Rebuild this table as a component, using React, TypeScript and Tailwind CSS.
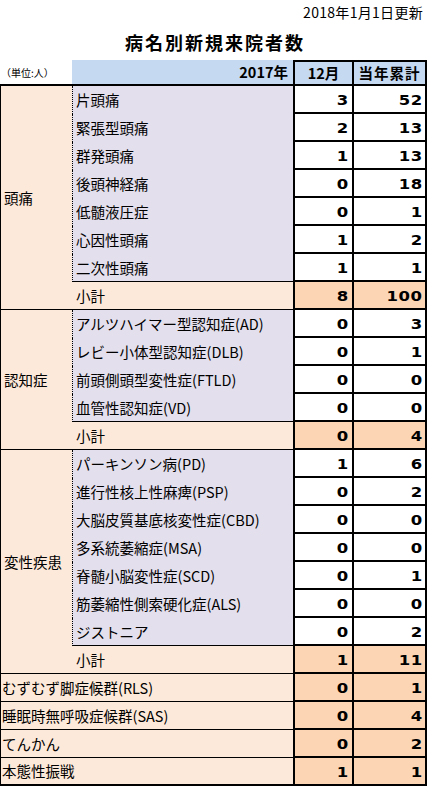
import React from "react";

type Item = [string, number, number];
type Group = { name: string; items: Item[]; total: [number, number] };

const groups: Group[] = [
  {
    name: "頭痛",
    items: [
      ["片頭痛", 3, 52],
      ["緊張型頭痛", 2, 13],
      ["群発頭痛", 1, 13],
      ["後頭神経痛", 0, 18],
      ["低髄液圧症", 0, 1],
      ["心因性頭痛", 1, 2],
      ["二次性頭痛", 1, 1],
    ],
    total: [8, 100],
  },
  {
    name: "認知症",
    items: [
      ["アルツハイマー型認知症(AD)", 0, 3],
      ["レビー小体型認知症(DLB)", 0, 1],
      ["前頭側頭型変性症(FTLD)", 0, 0],
      ["血管性認知症(VD)", 0, 0],
    ],
    total: [0, 4],
  },
  {
    name: "変性疾患",
    items: [
      ["パーキンソン病(PD)", 1, 6],
      ["進行性核上性麻痺(PSP)", 0, 2],
      ["大脳皮質基底核変性症(CBD)", 0, 0],
      ["多系統萎縮症(MSA)", 0, 0],
      ["脊髄小脳変性症(SCD)", 0, 1],
      ["筋萎縮性側索硬化症(ALS)", 0, 0],
      ["ジストニア", 0, 2],
    ],
    total: [1, 11],
  },
];

const singles: Item[] = [
  ["むずむず脚症候群(RLS)", 0, 1],
  ["睡眠時無呼吸症候群(SAS)", 0, 4],
  ["てんかん", 0, 2],
  ["本態性振戦", 1, 1],
];

function Num({ v }: { v: number }) {
  return (
    <span className="inline-block origin-right scale-x-[1.22] font-['DejaVu_Sans',sans-serif] font-bold text-[13.5px] tracking-[0.5px]">
      {v}
    </span>
  );
}

function Nums({ a, b, dark }: { a: number; b: number; dark: boolean }) {
  const bg = dark ? "bg-[#fcd5b4]" : "bg-white";
  return (
    <>
      <div
        className={`w-[59px] h-[28px] border-l-2 border-b-2 border-black ${bg} flex items-center justify-end pr-[3px] pt-[2px]`}
      >
        <Num v={a} />
      </div>
      <div
        className={`w-[75px] h-[28px] border-l-2 border-r-2 border-b-2 border-black ${bg} flex items-center justify-end pr-[2px] pt-[2px]`}
      >
        <Num v={b} />
      </div>
    </>
  );
}

export default function App() {
  return (
    <div className="w-[428px] h-[786px] bg-white overflow-hidden text-black font-['Noto_Sans_CJK_JP',sans-serif]">
      <div className="h-[24px] flex items-center justify-end pr-[5px] text-[14px] tracking-[0.3px]">
        2018年1月1日更新
      </div>
      <div className="h-[36px] flex items-center justify-center font-bold text-[18px] tracking-[2px] pl-[2px]">
        病名別新規来院者数
      </div>
      {/* header */}
      <div className="flex h-[26px] border-b-2 border-black w-[427px]">
        <div className="w-[72px] flex items-center pl-[1px] text-[10px]">（単位:人）</div>
        <div className="w-[221px] bg-[#c5d9f1] flex items-center justify-end pr-[5px] font-bold text-[14.5px]">
          2017年
        </div>
        <div className="w-[59px] bg-[#c5d9f1] border-l-2 border-t-2 border-black flex items-center justify-center font-bold text-[14.5px]">
          12月
        </div>
        <div className="w-[75px] bg-[#c5d9f1] border-l-2 border-t-2 border-r-2 border-black flex items-center justify-center font-bold text-[14.5px] tracking-[1px]">
          当年累計
        </div>
      </div>
      {/* groups */}
      {groups.map((g) => (
        <div key={g.name} className="flex w-[427px]">
          <div className="w-[72px] bg-[#fde9d9] border-l border-b border-black flex items-center pl-[3px] text-[14.5px]">
            {g.name}
          </div>
          <div className="flex flex-col">
            {g.items.map((it, i) => (
              <div key={it[0]} className="flex">
                <div
                  className={`w-[221px] h-[28px] bg-[#e4dfec] border-l border-dotted border-black flex items-center pl-[3px] text-[14.5px] whitespace-nowrap ${
                    i === g.items.length - 1 ? "border-b" : ""
                  }`}
                  style={i === g.items.length - 1 ? { borderBottomStyle: "solid" } : undefined}
                >
                  {it[0]}
                </div>
                <Nums a={it[1]} b={it[2]} dark={false} />
              </div>
            ))}
            <div className="flex">
              <div className="w-[221px] h-[28px] bg-[#fde9d9] border-b border-black flex items-center pl-[4px] text-[14.5px]">
                小計
              </div>
              <Nums a={g.total[0]} b={g.total[1]} dark={true} />
            </div>
          </div>
        </div>
      ))}
      {singles.map((s, i) => (
        <div key={s[0]} className="flex w-[427px]">
          <div
            className={`w-[293px] h-[28px] bg-[#fde9d9] border-l border-black flex items-center pl-[1px] text-[14.5px] whitespace-nowrap ${
              i === singles.length - 1 ? "border-b-2" : "border-b"
            }`}
          >
            {s[0]}
          </div>
          <Nums a={s[1]} b={s[2]} dark={true} />
        </div>
      ))}
    </div>
  );
}
